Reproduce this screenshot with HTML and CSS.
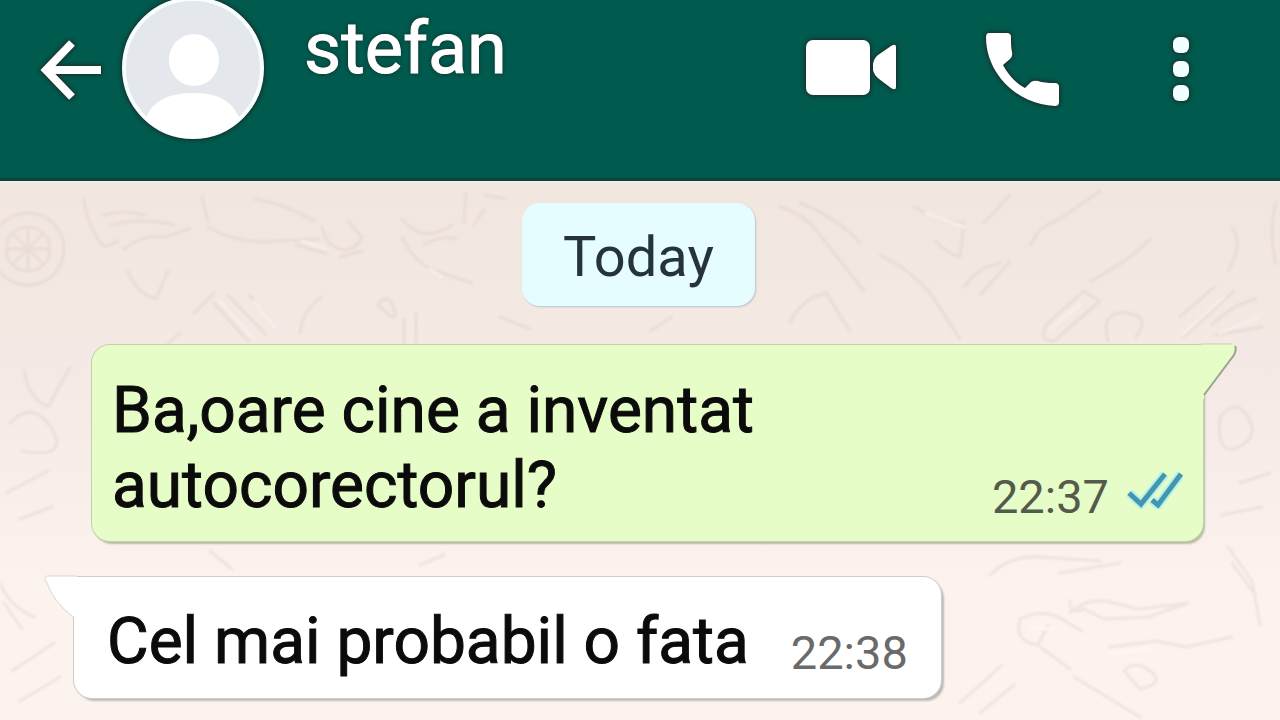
FILE: index.html
```html
<!DOCTYPE html>
<html lang="ro">
<head>
<meta charset="utf-8">
<meta name="viewport" content="width=device-width, initial-scale=1">
<title>stefan</title>
<link rel="stylesheet" href="styles.css">
</head>
<body>
<header class="topbar">
  <button class="icon-button back" type="button" aria-label="Back">
    <svg width="61" height="62" viewBox="0 0 61 62"><path d="M32 4 6 31l26 27M5 31h56" fill="none" stroke="#fff" stroke-width="8"/></svg>
  </button>
  <svg class="avatar" width="144" height="140" viewBox="0 4 144 140" aria-hidden="true">
    <defs><clipPath id="disc"><circle cx="72" cy="72" r="69"/></clipPath></defs>
    <circle cx="72" cy="72" r="69" fill="#e4e8ed" stroke="#f5ffff" stroke-width="4"/>
    <g clip-path="url(#disc)" fill="#fff"><ellipse cx="73" cy="64" rx="25" ry="26"/><path d="M24 124C31 104 49 97 73 97s39 8 46 27v22H24z"/></g>
  </svg>
  <h1 class="name">stefan</h1>
  <nav class="actions" aria-label="Actions">
    <button class="icon-button" type="button" aria-label="Video call">
      <svg width="90" height="58" viewBox="0 0 90 58"><rect width="64" height="55" rx="7" fill="#fff"/><path d="M67 24Q68 18 72 15L85 6Q90 3 90 7V47Q90 51 85 48L73 39Q68 35 67 30Z" fill="#fff"/></svg>
    </button>
    <button class="icon-button" type="button" aria-label="Voice call">
      <svg width="74" height="74" viewBox="0 0 74 74"><path d="M3 1H21Q25 1 25 5C25 11 25 15 26 20Q27 24 24 27L17 33C23 44 30 51 39 56L45 50Q48 48 52 49Q58 51 69 51Q73 51 73 55V70Q73 74 69 74C33 73 0 43 0 5Q0 1 3 1Z" fill="#fff"/></svg>
    </button>
    <button class="icon-button" type="button" aria-label="More options">
      <svg width="18" height="66" viewBox="0 0 18 66" fill="#f0ffff"><rect x="1" y="1" width="16" height="16" rx="6"/><rect x="1" y="25" width="16" height="16" rx="6"/><rect x="1" y="49" width="16" height="16" rx="6"/></svg>
    </button>
  </nav>
</header>
<main class="chat">
  <svg class="wallpaper" viewBox="0 0 1280 538" preserveAspectRatio="xMidYMin slice" aria-hidden="true">
    <g fill="none" stroke="#d6c9c0" stroke-width="3" stroke-linecap="round" stroke-linejoin="round">
      <circle cx="28" cy="66" r="36"/><circle cx="28" cy="66" r="22"/><path d="M28 46v40M8 66h40M14 52l28 28M42 52 14 80"/>
      <path d="M84 16q4 30 20 48l14-6M104 32q20-6 40 0M112 42q30-8 62 0M124 66q20-16 40-12l26-8M128 88q8 22 28 28l12-28M202 14l6 24M208 44q30 18 70 14l40-2M254 16q30 4 60 22M296 62l30 8M322 44q4 18 18 22t22-12l-14-16M340 74l22-6"/>
      <path d="M402 36q20 26 50 6M402 54q12 26 34 34l36 12M424 62q16-10 32-6M466 10l-2 30M484 12l22 4M474 42l10-16"/>
      <path d="M214 120l34 38M228 112l38 40M250 112l26 34M180 150l-18 16M194 130l20-20M300 150q4-26 22-36M378 122q10-14 16 4t-16-4M404 160v-24M416 160v-30"/>
      <path d="M914 24q22 14 50 16l-4 34q-14-4-24-16M984 40l26-28M1030 62q10-20 30-26l40-28M964 104q14-20 36-24M980 112l30-34M880 72q30 14 50 38l30 46M1090 98q40-20 60-42M1048 140l36-32 16 10-46 40q-18 0-6-18M1108 158q-8-30 18-28t10 24M1180 134l34-30M1184 154l50-46M1212 142q20-20 44-26M1216 152l46-8M1232 44q12 18-4 44M1276 20q-8 30 0 60"/>
      <path d="M780 24q26 8 40 28l44 56M800 20q40 16 60 40M790 140q10-24 36-30l24 38M500 134l30 12M650 148l22-14"/>
      <path d="M24 188q4 26 24 36l22-40M10 240q24-24 42 6t-30 22M6 310l42-22M20 336l32-12M1220 234q16-20 28 0t-10 30-18-30M1240 300l30-10M1222 332l40-8"/>
      <path d="M990 392q20-20 50-18l60 4M1060 390l60-10M1070 430q14-14 36-12l32 8 50-6-40 14-44 2-20-10q-16 6-14-8M1020 436q20-10 38-2l24 14M1020 438q-6 20 18 24l10-20M1040 464l30 22M1110 464l46-6 30 6 46-10M1124 488q10-12 26 0t-10 18l-16-18M1074 494l66 40M1228 364l24 34 8 44M1232 380l22 30M960 520l42-38M980 530l34-28"/>
      <path d="M0 400q10 24 34 34M4 420l18 26M12 488l42-28M20 518l40-24M210 368l22 18M420 382l24-10"/>
    </g>
    <g fill="none" stroke="#fffdf8" stroke-width="3" stroke-linecap="round">
      <path d="M220 118l34 38M254 118l22 28M302 58l24 8M430 86l12 8M926 30l38 14M1050 146l30-24M1182 152l42-38M1220 150l38-16M1030 444l24 2M1112 470l40-4"/>
    </g>
  </svg>
  <time class="day">Today</time>
  <article class="bubble sent">
    <svg class="tail tail-right" width="38" height="56" viewBox="0 0 38 56" aria-hidden="true"><path d="M0 1H31Q36 2 34 8L3 51V56H0Z" fill="#e6fdc8"/><path d="M0 1H31" stroke="#c5cfb1"/><path d="M34 3Q36 6 33 12L3 52" fill="none" stroke="#9aa58c" stroke-width="2"/></svg>
    <p class="text">Ba,oare cine a inventat autocorectorul?</p>
    <div class="meta">
      <time>22:37</time>
      <svg width="56" height="38" viewBox="0 0 56 38" role="img" aria-label="Read"><path d="M2 22 14 33 38 3M25 29 31 34 54 3" fill="none" stroke="#b5f1ef" stroke-width="9"/><path d="M2 22 14 33 38 3M25 29 31 34 54 3" fill="none" stroke="#4496ac" stroke-width="5"/></svg>
    </div>
  </article>
  <article class="bubble received">
    <svg class="tail tail-left" width="34" height="46" viewBox="0 0 34 46" aria-hidden="true"><path d="M34 1H4Q0 2 4 8Q10 26 31 42V46H34Z" fill="#fff"/><path d="M34 1H4Q0 2 4 8Q10 26 30 42" fill="none" stroke="#dad7ce"/></svg>
    <p class="text">Cel mai probabil o fata</p>
    <div class="meta"><time>22:38</time></div>
  </article>
</main>
</body>
</html>
```
FILE: styles.css
```css
* {
  box-sizing: border-box;
}

body {
  margin: 0;
  min-height: 100vh;
  display: flex;
  flex-direction: column;
  font-family: Roboto, "Noto Sans", sans-serif;
  background: #f8ece6;
}

.topbar {
  display: flex;
  align-items: center;
  padding: 0 90px 38px 40px;
  background: #005a4e;
  border-bottom: 3px solid #173f39;
  color: #fff;
}

.icon-button {
  padding: 0;
  border: 0;
  background: none;
  cursor: pointer;
}

.icon-button svg,
.avatar {
  display: block;
  flex: none;
  overflow: visible;
  filter: drop-shadow(0 0 2px #1b2f2c) drop-shadow(0 0 1px #1b2f2c);
}

.avatar {
  margin-left: 20px;
}

.name {
  flex: 1;
  margin: 0 0 0 39px;
  padding-bottom: 42px;
  font-size: 72px;
  line-height: 84px;
  font-weight: 400;
  text-shadow: 0 0 3px #1b2f2c, 0 0 4px #1b2f2c;
  -webkit-text-stroke: 1px;
}

.actions {
  display: flex;
  align-items: center;
  gap: 90px;
  padding-bottom: 3px;
}

.actions .icon-button:last-child {
  margin-left: 22px;
}

.chat {
  position: relative;
  flex: 1;
  display: flex;
  flex-direction: column;
  gap: 36px;
  padding: 20px 77px 22px 74px;
  border-top: 2px solid #e9f3ec;
  background: linear-gradient(#f2e7df, #f4e9e4 35%, #fdf3ee 75%);
}

.wallpaper {
  position: absolute;
  inset: 0;
  width: 100%;
  height: 100%;
  opacity: 0.35;
  filter: blur(1px);
}

.day {
  position: relative;
  align-self: center;
  margin-bottom: 3px;
  padding: 22px 41px 17px;
  border-radius: 18px;
  background: #e6fdff;
  box-shadow: 1px 1px 2px #b9c3c8;
  color: #26343a;
  font-size: 56px;
  line-height: 64px;
}

.bubble {
  position: relative;
  display: flex;
  align-items: flex-end;
  border-radius: 18px;
}

.sent {
  margin-left: 18px;
  padding: 28px 20px 18px;
  border-top-right-radius: 0;
  background: #e6fdc8;
  box-shadow: 0 0 0 1px #c5cfb1, 2px 3px 2px #b4bda4;
}

.received {
  align-self: flex-start;
  padding: 27px 33px 19px;
  border-top-left-radius: 0;
  background: #fff;
  box-shadow: 0 0 0 1px #cfcdc8, 3px 3px 2px #bdbbb8;
}

.text {
  flex: 1;
  margin: 0;
  color: #0b0b0b;
  font-size: 64px;
  line-height: 75px;
  -webkit-text-stroke: 1px;
}

.meta {
  display: flex;
  align-items: flex-start;
  gap: 18px;
  color: #555b4c;
  font-size: 47px;
  line-height: 52px;
}

.received .meta {
  margin-left: 42px;
  color: #6a6a6a;
}

.tail {
  position: absolute;
  top: -2px;
}

.tail-right {
  left: calc(100% - 2px);
}

.tail-left {
  right: calc(100% - 3px);
}
```
